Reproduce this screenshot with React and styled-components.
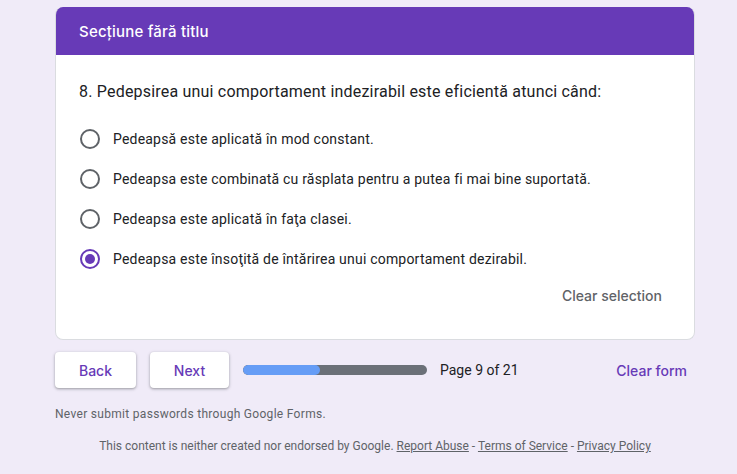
import React from "react";
import styled, { createGlobalStyle } from "styled-components";

const Global = createGlobalStyle`
  html, body { margin: 0; padding: 0; }
  body {
    background: #f0ebf8;
    font-family: Roboto, "Noto Sans", Arial, sans-serif;
    color: #202124;
  }
`;

const Page = styled.div`
  width: 640px;
  margin-left: 55px;
  padding-top: 7px;
`;

const Card = styled.section`
  background: #fff;
  border-radius: 8px;
  border: 1px solid #dadce0;
  border-top: none;
  overflow: hidden;
  box-sizing: border-box;
`;

const Header = styled.div`
  background: #673ab7;
  height: 48px;
  display: flex;
  align-items: center;
  padding: 0 24px;
  color: #fff;
  font-family: Inter, Roboto, sans-serif;
  font-size: 15px;
  font-weight: 500;
  letter-spacing: 0.2px;
  margin: 0 -1px;
`;

const Body = styled.div`
  padding: 25px 24px 26px 23px;
`;

const Question = styled.div`
  font-size: 16px;
  line-height: 24px;
  letter-spacing: 0.2px;
  color: #202124;
  margin-bottom: 23px;
`;

const Options = styled.div`
  display: flex;
  flex-direction: column;
  gap: 16px;
`;

const Option = styled.label`
  display: flex;
  align-items: center;
  height: 24px;
  font-size: 14px;
  letter-spacing: 0.2px;
  color: #202124;
  cursor: pointer;
`;

const Radio = styled.span`
  width: 20px;
  height: 20px;
  box-sizing: border-box;
  border-radius: 50%;
  border: 2px solid ${(p) => (p.$checked ? "#673ab7" : "#5f6368")};
  margin: 0 13px 0 1px;
  display: flex;
  align-items: center;
  justify-content: center;
  &::after {
    content: "";
    width: 10px;
    height: 10px;
    border-radius: 50%;
    background: #673ab7;
    display: ${(p) => (p.$checked ? "block" : "none")};
  }
`;

const ClearRow = styled.div`
  display: flex;
  justify-content: flex-end;
  margin-top: 6px;
`;

const TextButton = styled.button`
  background: none;
  border: none;
  padding: 0 8px;
  height: 36px;
  font-family: Inter, Roboto, sans-serif;
  font-size: 14px;
  font-weight: 500;
  color: ${(p) => p.$color || "#5f6368"};
  cursor: pointer;
`;

const Nav = styled.div`
  display: flex;
  align-items: center;
  margin-top: 12px;
  height: 36px;
`;

const NavButton = styled.button`
  background: #fff;
  border: none;
  border-radius: 4px;
  height: 36px;
  width: ${(p) => p.$w}px;
  margin-right: 14px;
  box-shadow: 0 1px 2px rgba(60, 64, 67, 0.3), 0 1px 3px 1px rgba(60, 64, 67, 0.15);
  font-family: Inter, Roboto, sans-serif;
  font-size: 14px;
  font-weight: 500;
  color: #673ab7;
  cursor: pointer;
`;

const Progress = styled.div`
  width: 184px;
  height: 10px;
  border-radius: 5px;
  background: #6b7078;
  overflow: hidden;
  display: flex;
`;

const Fill = styled.div`
  height: 100%;
  background: #669df6;
  border-radius: 5px;
`;

const PageLabel = styled.span`
  font-size: 14px;
  color: #202124;
  margin-left: 13px;
  flex: 1;
`;

const Note = styled.div`
  font-size: 12px;
  letter-spacing: 0.3px;
  color: #5f6368;
  margin-top: 18px;
  line-height: 16px;
`;

const Disclaimer = styled.div`
  font-size: 12px;
  color: #5f6368;
  text-align: center;
  margin-top: 16px;
  line-height: 16px;
  a {
    color: #5f6368;
    text-decoration: underline;
  }
`;

const options = [
  "Pedeapsă este aplicată în mod constant.",
  "Pedeapsa este combinată cu răsplata pentru a putea fi mai bine suportată.",
  "Pedeapsa este aplicată în faţa clasei.",
  "Pedeapsa este însoţită de întărirea unui comportament dezirabil.",
];

export default function App() {
  return (
    <>
      <Global />
      <Page>
        <Card>
          <Header>Secțiune fără titlu</Header>
          <Body>
            <Question>
              8. Pedepsirea unui comportament indezirabil este eficientă atunci când:
            </Question>
            <Options>
              {options.map((o, i) => (
                <Option key={i}>
                  <Radio $checked={i === 3} />
                  {o}
                </Option>
              ))}
            </Options>
            <ClearRow>
              <TextButton>Clear selection</TextButton>
            </ClearRow>
          </Body>
        </Card>
        <Nav>
          <NavButton $w={81}>Back</NavButton>
          <NavButton $w={79}>Next</NavButton>
          <Progress>
            <Fill style={{ width: `${(77 / 184) * 100}%` }} />
          </Progress>
          <PageLabel>Page 9 of 21</PageLabel>
          <TextButton $color="#673ab7">Clear form</TextButton>
        </Nav>
        <Note>Never submit passwords through Google Forms.</Note>
        <Disclaimer>
          This content is neither created nor endorsed by Google.{" "}
          <a href="#">Report Abuse</a> - <a href="#">Terms of Service</a> -{" "}
          <a href="#">Privacy Policy</a>
        </Disclaimer>
      </Page>
    </>
  );
}
